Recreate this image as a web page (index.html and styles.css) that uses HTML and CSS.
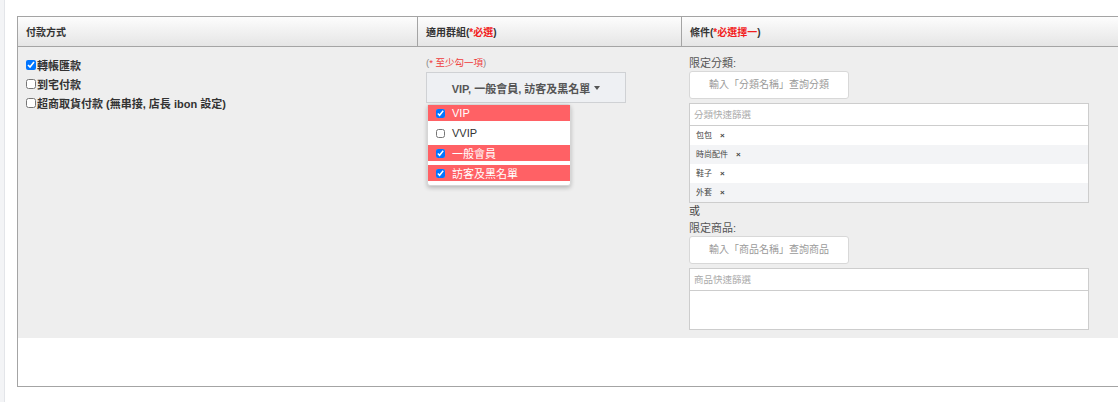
FILE: index.html
```html
<!DOCTYPE html>
<html lang="zh-Hant">
<head>
<meta charset="utf-8">
<title>付款方式</title>
<link rel="stylesheet" href="styles.css">
</head>
<body>
<div class="page">
  <div class="rail"></div>
  <main class="main">
    <table class="pay-table">
      <thead>
        <tr>
          <th class="col-pay">付款方式</th>
          <th class="col-group">適用群組(<span class="req">*必選</span>)</th>
          <th class="col-cond">條件(<span class="req">*必選擇一</span>)</th>
        </tr>
      </thead>
      <tbody>
        <tr class="row-main">
          <td class="cell-pay">
            <label class="pay-opt"><input type="checkbox" checked>轉帳匯款</label>
            <label class="pay-opt"><input type="checkbox">到宅付款</label>
            <label class="pay-opt"><input type="checkbox">超商取貨付款 (無串接, 店長 ibon 設定)</label>
          </td>
          <td class="cell-group">
            <div class="hint">(<span class="hint-req">* 至少勾一項</span>)</div>
            <div class="dd">
              <button class="dd-btn" type="button">VIP, 一般會員, 訪客及黑名單 <span class="caret"></span></button>
              <ul class="dd-menu">
                <li class="dd-item on"><label><input type="checkbox" checked>VIP</label></li>
                <li class="dd-item"><label><input type="checkbox">VVIP</label></li>
                <li class="dd-item on"><label><input type="checkbox" checked>一般會員</label></li>
                <li class="dd-item on"><label><input type="checkbox" checked>訪客及黑名單</label></li>
              </ul>
            </div>
          </td>
          <td class="cell-cond">
            <div class="cond-label">限定分類:</div>
            <div class="pick-btn">輸入「分類名稱」查詢分類</div>
            <div class="filter-box">
              <div class="filter-input">分類快速篩選</div>
              <ul class="filter-list">
                <li>包包<span class="x">×</span></li>
                <li>時尚配件<span class="x">×</span></li>
                <li>鞋子<span class="x">×</span></li>
                <li>外套<span class="x">×</span></li>
              </ul>
            </div>
            <div class="cond-or">或</div>
            <div class="cond-label">限定商品:</div>
            <div class="pick-btn">輸入「商品名稱」查詢商品</div>
            <div class="filter-box">
              <div class="filter-input">商品快速篩選</div>
              <div class="filter-empty"></div>
            </div>
          </td>
        </tr>
        <tr class="row-empty"><td colspan="3"></td></tr>
      </tbody>
    </table>
  </main>
</div>
</body>
</html>
```
FILE: styles.css
```css
html, body {
  margin: 0;
  padding: 0;
  overflow: hidden;
  background: #fff;
}
body {
  font-family: "Liberation Sans", "Noto Sans CJK TC", sans-serif;
  color: #333;
}
.page {
  display: flex;
  width: 1118px;
  height: 402px;
}
.rail {
  flex: 0 0 4px;
  background: #f3f4f6;
  border-right: 1px solid #e3e5e9;
}
.main {
  flex: 1;
  padding: 16px 0 0 12px;
  overflow: hidden;
}
.pay-table {
  border-collapse: separate;
  border-spacing: 0;
  table-layout: fixed;
  width: 1140px;
  border-top: 1px solid #a4a4a4;
  border-left: 1px solid #a4a4a4;
  border-bottom: 1px solid #a4a4a4;
}
.pay-table th {
  box-sizing: border-box;
  height: 30px;
  padding: 0 8px;
  text-align: left;
  font-size: 10px;
  font-weight: bold;
  color: #333;
  background: linear-gradient(#fdfdfd, #e5e5e5);
  border-bottom: 1px solid #a4a4a4;
  border-right: 1px solid #a4a4a4;
}
.pay-table th.col-pay { width: 400px; }
.pay-table th.col-group { width: 264px; }
.req { color: #f21d1d; }

.row-main td {
  vertical-align: top;
  background: #eeeeee;
  padding: 8px;
}
.row-main td.cell-cond {
  padding-left: 7px;
}
.row-empty td {
  height: 48px;
  padding: 0;
  background: #fff;
}

/* payment options */
.pay-opt {
  display: flex;
  align-items: center;
  height: 19px;
  font-size: 11px;
  font-weight: bold;
  color: #333;
}
.pay-opt input {
  width: 10px;
  height: 10px;
  margin: 0 1px 0 0;
}

/* group column */
.hint {
  font-size: 9.5px;
  line-height: 16px;
  color: #888;
}
.hint-req { color: #ef3b3b; }
.dd {
  position: relative;
  margin-top: 1px;
}
.dd-btn {
  box-sizing: border-box;
  display: flex;
  align-items: center;
  justify-content: center;
  width: 200px;
  height: 31px;
  padding: 0;
  border: 1px solid #cfd1d4;
  background: #eef0f3;
  font-family: inherit;
  font-size: 11px;
  font-weight: bold;
  color: #555;
}
.caret {
  display: inline-block;
  margin-left: 4px;
  border-top: 4px solid #555;
  border-left: 3.5px solid transparent;
  border-right: 3.5px solid transparent;
}
.dd-menu {
  position: absolute;
  top: 32px;
  left: 1px;
  width: 142px;
  margin: 0;
  padding: 0;
  list-style: none;
  background: #fff;
  border: 1px solid #d6d6d6;
  border-radius: 3px;
  box-shadow: 0 2px 4px rgba(0, 0, 0, 0.22);
}
.dd-item {
  height: 20px;
}
.dd-item label {
  display: flex;
  align-items: center;
  height: 16px;
  padding-left: 8px;
  font-size: 11px;
  color: #333;
}
.dd-item.on label {
  background: #ff6165;
  color: #fff;
}
.dd-item input {
  width: 9px;
  height: 9px;
  margin: 1px 7px 0 0;
}

/* condition column */
.cond-label {
  font-size: 11px;
  line-height: 16px;
  color: #555;
}
.cond-or {
  font-size: 11px;
  line-height: 17px;
  color: #444;
}
.pick-btn {
  box-sizing: border-box;
  width: 160px;
  height: 28px;
  border: 1px solid #d8d8d8;
  border-radius: 3px;
  background: #fff;
  font-size: 10px;
  line-height: 26px;
  text-align: center;
  color: #9a9a9a;
}
.filter-box {
  box-sizing: border-box;
  width: 400px;
  margin-top: 4px;
  border: 1px solid #cdcdcd;
  background: #fff;
}
.filter-input {
  box-sizing: border-box;
  height: 22px;
  padding-left: 4px;
  border-bottom: 1px solid #cdcdcd;
  font-size: 9.5px;
  line-height: 21px;
  color: #aaa;
}
.filter-list {
  margin: 0;
  padding: 0;
  list-style: none;
}
.filter-list li {
  height: 19px;
  padding-left: 6px;
  font-size: 8px;
  line-height: 19px;
  color: #444;
}
.filter-list li:nth-child(even) {
  background: #f3f4f6;
}
.x {
  margin-left: 8px;
  font-size: 8px;
  font-weight: bold;
  color: #444;
}
.filter-empty {
  height: 38px;
}
```
